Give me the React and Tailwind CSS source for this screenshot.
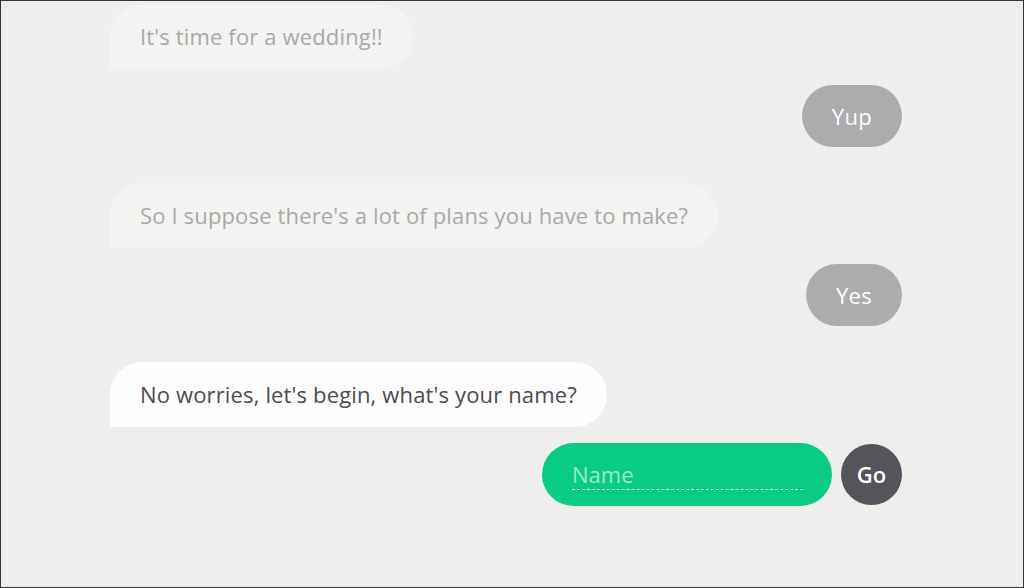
import React from "react";

const messages = [
  { bot: "It's time for a wedding!!", reply: "Yup" },
  { bot: "So I suppose there's a lot of plans you have to make?", reply: "Yes" },
];

function BotBubble({ text, active }) {
  return (
    <div className="flex">
      <div
        className={
          active
            ? "h-[65px] flex items-center px-[30px] rounded-[33px] rounded-bl-none bg-[#fefefe] text-[#4b4b50] text-[22px] tracking-[0.15px]"
            : "h-[65px] flex items-center px-[30px] rounded-[33px] rounded-bl-none bg-[#f3f3f2] text-[#a9a9a9] text-[22px] tracking-[0.15px]"
        }
      >
        {text}
      </div>
    </div>
  );
}

function Reply({ text }) {
  return (
    <div className="flex justify-end">
      <div className="h-[62px] flex items-center px-[30px] rounded-full bg-[#acacae] text-white text-[22px] tracking-[0.3px]">
        {text}
      </div>
    </div>
  );
}

export default function App() {
  return (
    <div
      className="h-[588px] w-[1024px] overflow-hidden border border-[#333] bg-[#eeeeec]"
      style={{ fontFamily: '"Open Sans", "Noto Sans", sans-serif' }}
    >
      <div className="ml-[109px] w-[792px] pt-[3px] flex flex-col">
        {messages.map((m, i) => (
          <div key={i} className="flex flex-col gap-4 mb-[36px]">
            <BotBubble text={m.bot} />
            <Reply text={m.reply} />
          </div>
        ))}
        <BotBubble text="No worries, let's begin, what's your name?" active />
        <div className="flex justify-end items-center gap-[9px] mt-4">
          <div className="w-[290px] h-[63px] rounded-full bg-[#0acb85] flex items-center pl-[30px] pr-[29px]">
            <input
              placeholder="Name"
              className="w-full bg-transparent outline-none text-[22px] text-white placeholder:text-[#9aeccb] border-b border-dashed border-[#e0f9ee] pb-[1px] leading-[28px]"
            />
          </div>
          <button className="w-[61px] h-[61px] rounded-full bg-[#55545a] text-white text-[22px] font-semibold flex items-center justify-center">
            Go
          </button>
        </div>
      </div>
    </div>
  );
}
